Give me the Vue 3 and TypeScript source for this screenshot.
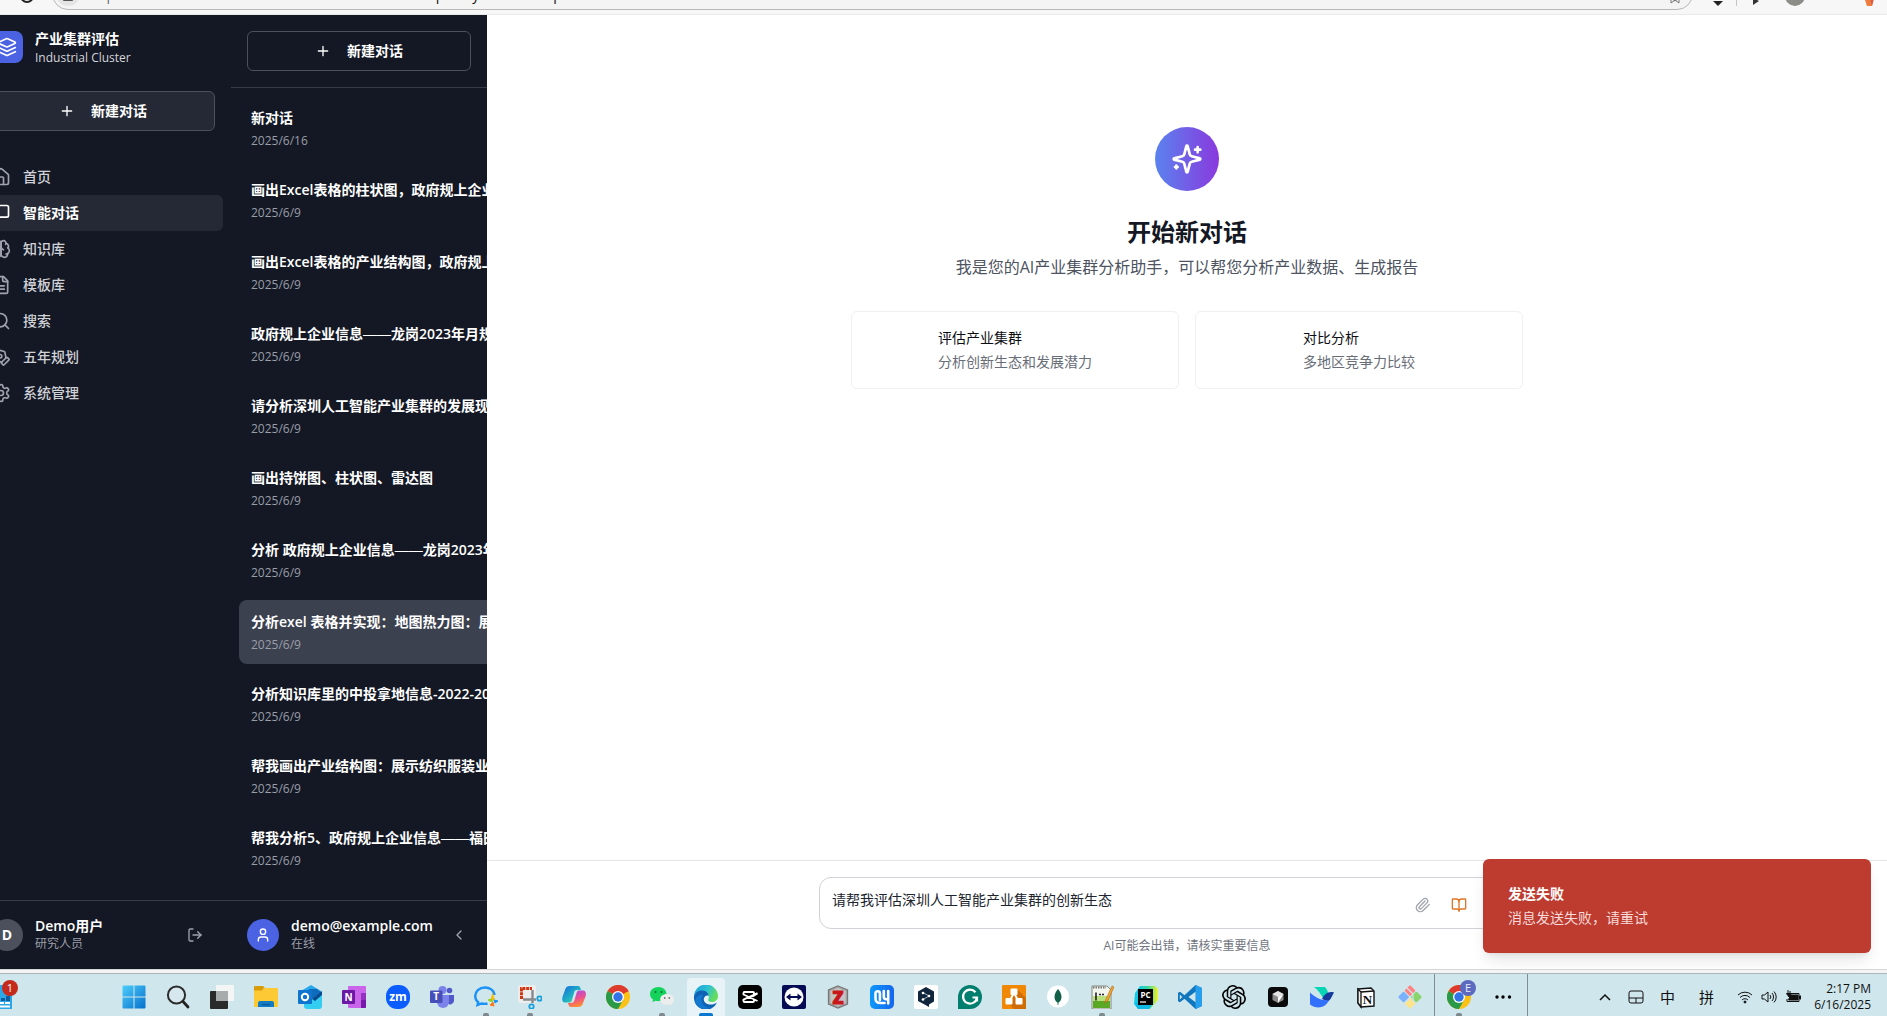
<script setup lang="ts">
import { ref } from 'vue'

interface NavItem { label: string; icon: string; active?: boolean }
interface Conversation { title: string; date: string; active?: boolean }
interface TaskItem { name: string; art: string; state?: 'running' | 'wide' | 'active' }

const draft = ref('请帮我评估深圳人工智能产业集群的创新生态')

const nav: NavItem[] = [
  { label: '首页', icon: '<path d="M15 21v-8a1 1 0 0 0-1-1h-4a1 1 0 0 0-1 1v8"/><path d="M3 10a2 2 0 0 1 .709-1.528l7-5.999a2 2 0 0 1 2.582 0l7 5.999A2 2 0 0 1 21 10v9a2 2 0 0 1-2 2H5a2 2 0 0 1-2-2z"/>' },
  { label: '智能对话', active: true, icon: '<path d="M21 15a2 2 0 0 1-2 2H7l-4 4V5a2 2 0 0 1 2-2h14a2 2 0 0 1 2 2z"/>' },
  { label: '知识库', icon: '<path d="M12 5a3 3 0 1 0-5.997.125 4 4 0 0 0-2.526 5.77 4 4 0 0 0 .556 6.588A4 4 0 1 0 12 18Z"/><path d="M12 5a3 3 0 1 1 5.997.125 4 4 0 0 1 2.526 5.77 4 4 0 0 1-.556 6.588A4 4 0 1 1 12 18Z"/><path d="M15 13a4.5 4.5 0 0 1-3-4 4.5 4.5 0 0 1-3 4"/><path d="M17.599 6.5a3 3 0 0 0 .399-1.375"/><path d="M19.938 10.5a4 4 0 0 1 .585.396"/><path d="M19.967 17.484A4 4 0 0 1 18 18"/>' },
  { label: '模板库', icon: '<path d="M15 2H6a2 2 0 0 0-2 2v16a2 2 0 0 0 2 2h12a2 2 0 0 0 2-2V7Z"/><path d="M14 2v4a2 2 0 0 0 2 2h4"/><path d="M10 9H8"/><path d="M16 13H8"/><path d="M16 17H8"/>' },
  { label: '搜索', icon: '<circle cx="11" cy="11" r="8"/><path d="m21 21-4.3-4.3"/>' },
  { label: '五年规划', icon: '<path d="M15.707 21.293a1 1 0 0 1-1.414 0l-1.586-1.586a1 1 0 0 1 0-1.414l5.586-5.586a1 1 0 0 1 1.414 0l1.586 1.586a1 1 0 0 1 0 1.414z"/><path d="m18 13-1.375-6.874a1 1 0 0 0-.746-.776L3.235 2.028a1 1 0 0 0-1.207 1.207L5.35 15.879a1 1 0 0 0 .776.746L13 18"/><path d="m2.3 2.3 7.286 7.286"/><circle cx="11" cy="11" r="2"/>' },
  { label: '系统管理', icon: '<path d="M12.22 2h-.44a2 2 0 0 0-2 2v.18a2 2 0 0 1-1 1.73l-.43.25a2 2 0 0 1-2 0l-.15-.08a2 2 0 0 0-2.73.73l-.22.38a2 2 0 0 0 .73 2.73l.15.1a2 2 0 0 1 1 1.72v.51a2 2 0 0 1-1 1.74l-.15.09a2 2 0 0 0-.73 2.73l.22.38a2 2 0 0 0 2.73.73l.15-.08a2 2 0 0 1 2 0l.43.25a2 2 0 0 1 1 1.73V20a2 2 0 0 0 2 2h.44a2 2 0 0 0 2-2v-.18a2 2 0 0 1 1-1.73l.43-.25a2 2 0 0 1 2 0l.15.08a2 2 0 0 0 2.73-.73l.22-.39a2 2 0 0 0-.73-2.73l-.15-.08a2 2 0 0 1-1-1.74v-.5a2 2 0 0 1 1-1.74l.15-.09a2 2 0 0 0 .73-2.73l-.22-.38a2 2 0 0 0-2.73-.73l-.15.08a2 2 0 0 1-2 0l-.43-.25a2 2 0 0 1-1-1.73V4a2 2 0 0 0-2-2z"/><circle cx="12" cy="12" r="3"/>' },
]

const conversations: Conversation[] = [
  { title: '新对话', date: '2025/6/16' },
  { title: '画出Excel表格的柱状图，政府规上企业', date: '2025/6/9' },
  { title: '画出Excel表格的产业结构图，政府规上', date: '2025/6/9' },
  { title: '政府规上企业信息——龙岗2023年月规', date: '2025/6/9' },
  { title: '请分析深圳人工智能产业集群的发展现', date: '2025/6/9' },
  { title: '画出持饼图、柱状图、雷达图', date: '2025/6/9' },
  { title: '分析 政府规上企业信息——龙岗2023年', date: '2025/6/9' },
  { title: '分析exel 表格并实现：地图热力图：展', date: '2025/6/9', active: true },
  { title: '分析知识库里的中投拿地信息-2022-202', date: '2025/6/9' },
  { title: '帮我画出产业结构图：展示纺织服装业', date: '2025/6/9' },
  { title: '帮我分析5、政府规上企业信息——福田', date: '2025/6/9' },
]

// Dash pairs get a face with full-width dashes so that they join into one line.
const splitDashes = (title: string): string[] => title.split(/(——)/)

const suggestions = [
  { title: '评估产业集群', text: '分析创新生态和发展潜力' },
  { title: '对比分析', text: '多地区竞争力比较' },
]

const f = 'font-family="Open Sans, sans-serif" text-anchor="middle"'
const chrome = '<circle cx="12" cy="12" r="12" fill="#fbc116"/><path d="M12 12 1.6 6A12 12 0 0 1 22.4 6z" fill="#dd3b2e"/><path d="M12 12 1.6 6A12 12 0 0 0 12 24l5-9z" fill="#2a9a48"/><path d="M12 6.5h10.7A12 12 0 0 0 12 0z" fill="#dd3b2e"/><circle cx="12" cy="12" r="6" fill="#fff"/><circle cx="12" cy="12" r="4.7" fill="#3273e6"/>'

const tasks: TaskItem[] = [
  { name: 'Start', art: '<defs><linearGradient id="gw" x2="1" y2="1"><stop stop-color="#4ccdfb"/><stop offset="1" stop-color="#0670cc"/></linearGradient></defs><path fill="url(#gw)" d="M1.5.5h10v11H.5v-10a1 1 0 0 1 1-1zM12.500.5h10a1 1 0 0 1 1 1v10h-11zM.5 12.500h11v11h-10a1 1 0 0 1-1-1zM12.500 12.500h11v10a1 1 0 0 1-1 1h-10z"/>' },
  { name: 'Search', art: '<circle cx="10.500" cy="10" r="8.600" fill="#d6e8ee" stroke="#2c2c2c" stroke-width="2"/><path d="m17 16.500 5 5.500" stroke="#222" stroke-width="2.800" stroke-linecap="round"/>' },
  { name: 'Task view', art: '<rect x="0" y="6" width="18" height="18" rx="1" fill="#2a2a2a"/><rect x="6" y="0" width="18" height="16" rx="1" fill="#f4f5f5"/><path d="M6 6h12v10H6z" fill="#a8abac"/>' },
  { name: 'File Explorer', art: '<path d="M0 2a1 1 0 0 1 1-1h8l2 2h-1L8 6H0z" fill="#d99b08"/><path d="M0 5.500h8l2.500-2.500H23a1 1 0 0 1 1 1V22H0z" fill="#fdc934"/><path d="M4 22v-4a2 2 0 0 1 2-2h12a2 2 0 0 1 2 2v4z" fill="#117cc4"/><path d="M8 19h8v1.200H8z" fill="#0a5793"/>' },
  { name: 'Outlook', art: '<path d="M3 6 13 0l10 6v5H3z" fill="#28a8ea"/><path d="M11 4h8l5 4v8H11z" fill="#0f6cbd"/><path d="M6 12l8 2 10-7v14a3 3 0 0 1-3 3H9a3 3 0 0 1-3-3z" fill="#32cdf1"/><path d="m14 14 10-8v4l-7 6z" fill="#0a4a8c"/><rect y="5" width="14" height="14" rx="1" fill="#0d74cf"/><circle cx="7" cy="12" r="3.200" fill="none" stroke="#fff" stroke-width="2"/>' },
  { name: 'OneNote', art: `<rect x="6" y="1" width="18" height="22" rx="1" fill="#ca64ea"/><path d="M19 8h5v7h-5z" fill="#9332bf"/><path d="M19 15h5v7a1 1 0 0 1-1 1h-4z" fill="#7719aa"/><rect y="5" width="13" height="14" rx="1" fill="#6d17a5"/><text x="6.500" y="15.500" font-size="10" font-weight="700" fill="#fff" ${f}>N</text>` },
  { name: 'Zoom', art: `<rect width="24" height="24" rx="11" fill="#0b5cff"/><text x="12" y="16" font-size="12" font-weight="700" fill="#fff" ${f}>zm</text>` },
  { name: 'Teams', art: `<circle cx="12.500" cy="5" r="4" fill="#7b83eb"/><circle cx="19.500" cy="5.500" r="2.800" fill="#5059c9"/><path d="M16 10h8v6a4 4 0 0 1-7 2z" fill="#5059c9"/><path d="M7 10h12v7a6 6 0 0 1-12 0z" fill="#7b83eb"/><rect y="5.500" width="12.500" height="12.500" rx="1" fill="#464eb8"/><text x="6.200" y="15.200" font-size="10" font-weight="700" fill="#fff" ${f}>T</text>` },
  { name: 'WeCom', state: 'running', art: '<path d="M20.500 10C20 5 15.500 2.500 11 2.500 5 2.500 1.200 6.500 1.200 11c0 3 1.500 5 3 6.200L3.500 20l4-1.500c2 .5 4.500.5 6-.2" fill="none" stroke="#1b92f5" stroke-width="2.400"/><path d="m18.500 10 1.500 4-2.500 1z" fill="#fbbc05" stroke="#fbbc05" stroke-width="1.500"/><path d="m14 15 3.500-1 1 3z" fill="#8fce1b" stroke="#8fce1b"/><path d="m16 20 3-3 1 4z" fill="#ff7a1a" stroke="#ff7a1a"/><path d="m20 15 4 1-3 2z" fill="#1b92f5" stroke="#1b92f5"/>' },
  { name: 'Snipping Tool', state: 'wide', art: '<rect width="18" height="18" rx="2" fill="#ededed"/><path d="M3.500 14V3.500H14" fill="none" stroke="#d1350f" stroke-width="3" stroke-dasharray="3 .8"/><path d="M14.500 5v9.500H5M14.500 12.500V18M14.500 14.500H18" fill="none" stroke="#858b8e" stroke-width="2.400"/><circle cx="21.500" cy="13.500" r="2.200" fill="none" stroke="#16a0dc" stroke-width="1.800"/><circle cx="13.500" cy="21.500" r="2.200" fill="none" stroke="#16a0dc" stroke-width="1.800"/>' },
  { name: 'Copilot', art: '<defs><linearGradient id="gc1" y2="1"><stop stop-color="#1468e0"/><stop offset=".6" stop-color="#20b8c0"/><stop offset="1" stop-color="#e8d32c"/></linearGradient><linearGradient id="gc2" x2=".3" y2="1"><stop stop-color="#a04cf0"/><stop offset=".6" stop-color="#f0508c"/><stop offset="1" stop-color="#fc8a38"/></linearGradient></defs><path d="M8 1h8c2 0 2.500 2 3 4h-4c-2 0-2.500 1-3 3l-2 7c-.5 2-1.500 2.500-3 2.500H3C0 17.500 0 14 .5 12L3 5c.8-2.500 2-4 5-4z" fill="url(#gc1)"/><path d="M16 22H9c-2 0-2.500-2-3-4h3c2 0 3-1 3.500-3l2-7c.5-2 1.500-2.500 3-2.500H21c3 0 3.300 3.500 2.700 5.500L21 18c-.8 2.500-2 4-5 4z" fill="url(#gc2)"/>' },
  { name: 'Chrome', art: chrome },
  { name: 'WeChat', state: 'running', art: '<path d="M8.500 2C3.500 2 0 5 0 9c0 2.500 1.200 4.200 3 5.500L2.500 17l3-1.300c5 1.300 11-1 11-6.700 0-4-3.500-7-8-7z" fill="#14d25c"/><circle cx="5.500" cy="7" r="1" fill="#0a6a30"/><circle cx="11.500" cy="7" r="1" fill="#0a6a30"/><path d="M17 9c4 0 7 2.300 7 5.500 0 2-1 3.200-2.200 4.200l.4 2-2.500-1.200c-5 1.200-9.500-1.200-9.500-5C10.200 11.300 13 9 17 9z" fill="#eceded"/><circle cx="14.700" cy="13" r=".9" fill="#777"/><circle cx="19.300" cy="13" r=".9" fill="#777"/>' },
  { name: 'Edge', state: 'active', art: '<defs><linearGradient id="ge" x2="1" y2=".4"><stop stop-color="#1c9be0"/><stop offset=".6" stop-color="#2fc3cf"/><stop offset="1" stop-color="#64dd5c"/></linearGradient></defs><path d="M0 12A12 12 0 0 1 24 11c0 4-3 6-6.500 6-3 0-4-1.500-3-3 1-2 0-5-4-5C5 9 0 12 0 12z" fill="url(#ge)"/><path d="M0 12c1-5 5-7 9-6.500 3 .4 5.500 2.500 5.500 5-6-1-7 8 1 9 3 .3 5.500-.5 7.500-2A12 12 0 0 1 0 12z" fill="#0f62b4"/><path d="M8.500 11c-3 5 1 12 8 11.500C12 25 4 24 1.500 18 .5 13 4 9.500 9 9.500z" fill="#1379cf"/>' },
  { name: 'CapCut', art: '<rect width="24" height="24" rx="5" fill="#000"/><path d="M19.500 8.500 16 10.500V8a1 1 0 0 0-1-1H6.500a1 1 0 0 0-1 1v1.500l14 6.500M19.500 8l-14 6.700V16a1 1 0 0 0 1 1H15a1 1 0 0 0 1-1v-2" fill="none" stroke="#fff" stroke-width="1.900"/>' },
  { name: 'TeamViewer', art: '<rect width="24" height="24" rx="2" fill="#050a52"/><circle cx="12" cy="12" r="9.500" fill="#fff"/><path d="m4 12 4.500-3.500V11h7V8.500L20 12l-4.500 3.500V13h-7v2.500z" fill="#050a52"/>' },
  { name: 'Zotero', art: `<path d="M12 1 21.500 5v14L12 23 2.500 19V5z" fill="#a9a9a9" stroke="#777" stroke-width="1.300"/><path d="m12 3 7.500 3v12L12 21l-7.500-3V6z" fill="#c4c4c4"/><text x="12" y="18.500" font-size="18" font-weight="800" fill="#c8161a" stroke="#c8161a" stroke-width="1" ${f}>Z</text>` },
  { name: 'Mail', art: '<defs><linearGradient id="gm" x2="1"><stop stop-color="#0c98fb"/><stop offset="1" stop-color="#1566ef"/></linearGradient></defs><rect width="24" height="24" rx="5" fill="url(#gm)"/><path d="M5.500 13.500V8.500a2.200 2.200 0 0 1 4.400 0V15M5.500 13.500c0 3.200 2 4.500 5 4.500h4M13.800 6v5.500c0 1.800.8 2.800 2.400 2.800h2M18.200 6v12.500" fill="none" stroke="#fff" stroke-width="2.600" stroke-linecap="round"/>' },
  { name: 'DeepL', art: '<rect width="24" height="24" rx="2" fill="#fff"/><path d="M12 2 20 6.500v10L15 19.500V22l-4-2.200-7-3.800V6.500z" fill="#11263d"/><path d="m9 7.500 6 3.500-6 3.500" fill="none" stroke="#9db4c8" stroke-width="1"/><circle cx="9" cy="8" r="1.300" fill="#fff"/><circle cx="15" cy="11" r="1.300" fill="#fff"/><circle cx="9" cy="14.500" r="1.300" fill="#fff"/>' },
  { name: 'Grammarly', art: '<path d="M0 24V12A12 12 0 1 1 12 24z" fill="#027e6f"/><path d="M17.500 7.200A7 7 0 1 0 19 12.500h-4.500M19 12.500v4" fill="none" stroke="#fff" stroke-width="2.200"/>' },
  { name: 'draw.io', art: '<rect width="24" height="24" rx="1" fill="#f08705"/><path d="m15 4 9 9v11H12L5 17z" fill="#d06c04"/><path d="m12 8-5 9M12 8l5 9" stroke="#fff" stroke-width="2"/><rect x="8.500" y="3.500" width="7" height="6.500" rx="1" fill="#fff"/><rect x="3.500" y="13" width="7" height="6.500" rx="1" fill="#fff"/><rect x="13.500" y="13" width="7" height="6.500" rx="1" fill="#fff"/>' },
  { name: 'MongoDB', art: '<circle cx="12" cy="11.500" r="11" fill="#fff"/><path d="M12 4c2 2.500 3.500 4.500 3.500 8 0 3-1.500 4.500-3 5.500L12.300 20h-.6l-.2-2.500c-1.500-1-3-2.500-3-5.500 0-3.500 1.500-5.500 3.500-8z" fill="#116149"/>' },
  { name: 'Notepad++', state: 'running', art: '<path d="M2 1h15l4 4v19H2z" fill="#f2f5ee" stroke="#84877d" stroke-width="1"/><path d="M3 11h17v7H3z" fill="#b9e07c"/><path d="M3 16h17v7H3z" fill="#5aa823"/><path d="M3 2.500h13" stroke="#777" stroke-width="2" stroke-dasharray="1.500 1"/><path d="M6 7.500v8M9 9.500h2M12 9.500h2" stroke="#222" stroke-width="1.600"/><path d="m22 1-6 13-1.500 4 3.500-2.500L24 2z" fill="#f2a72a" stroke="#a75712" stroke-width=".5"/>' },
  { name: 'PyCharm', art: `<defs><linearGradient id="gp" x2="1" y2="0"><stop offset=".2" stop-color="#12c9e8"/><stop offset=".6" stop-color="#3fd896"/><stop offset="1" stop-color="#f2f02c"/></linearGradient></defs><path d="M6 1h15l3 3v11l-8 9H4l-4-5 1-11z" fill="url(#gp)"/><path d="m1 19 3-2 14 3-3 4H4z" fill="#0fb7e4"/><path d="M4 4h15v16H4z" fill="#000"/><text x="11.500" y="12.500" font-size="8" font-weight="700" fill="#fff" ${f}>PC</text><path d="M6 17h6" stroke="#fff" stroke-width="1.200"/>` },
  { name: 'VS Code', art: '<path d="M17.500 0 24 3v18l-6.500 3L6.500 13.800 2 17.200 0 16.300V7.700l2-.9 4.500 3.400z" fill="#1076bd"/><path d="M17.500 0 24 3v18l-6.500 3z" fill="#26a0ee"/><path d="M17.500 6.800v10.400L10.500 12zM1.800 9.500 4.300 12l-2.500 2.500z" fill="#cfe6ec"/>' },
  { name: 'ChatGPT', art: '<path d="M22.2819 9.8211a5.9847 5.9847 0 0 0-.5157-4.9108 6.0462 6.0462 0 0 0-6.5098-2.9A6.0651 6.0651 0 0 0 4.9807 4.1818a5.9847 5.9847 0 0 0-3.9977 2.9 6.0462 6.0462 0 0 0 .7427 7.0966 5.98 5.98 0 0 0 .511 4.9107 6.051 6.051 0 0 0 6.5146 2.9001A5.9847 5.9847 0 0 0 13.2599 24a6.0557 6.0557 0 0 0 5.7718-4.2058 5.9894 5.9894 0 0 0 3.9977-2.9001 6.0557 6.0557 0 0 0-.7475-7.0729zm-9.022 12.6081a4.4755 4.4755 0 0 1-2.8764-1.0408l.1419-.0804 4.7783-2.7582a.7948.7948 0 0 0 .3927-.6813v-6.7369l2.02 1.1686a.071.071 0 0 1 .038.052v5.5826a4.504 4.504 0 0 1-4.4945 4.4944zm-9.6607-4.1254a4.4708 4.4708 0 0 1-.5346-3.0137l.142.0852 4.783 2.7582a.7712.7712 0 0 0 .7806 0l5.8428-3.3685v2.3324a.0804.0804 0 0 1-.0332.0615L9.74 19.9502a4.4992 4.4992 0 0 1-6.1408-1.6464zM2.3408 7.8956a4.485 4.485 0 0 1 2.3655-1.9728V11.6a.7664.7664 0 0 0 .3879.6765l5.8144 3.3543-2.0201 1.1685a.0757.0757 0 0 1-.071 0l-4.8303-2.7865A4.504 4.504 0 0 1 2.3408 7.872zm16.5963 3.8558L13.1038 8.364 15.1192 7.2a.0757.0757 0 0 1 .071 0l4.8303 2.7913a4.4944 4.4944 0 0 1-.6765 8.1042v-5.6772a.79.79 0 0 0-.407-.667zm2.0107-3.0231l-.142-.0852-4.7735-2.7818a.7759.7759 0 0 0-.7854 0L9.409 9.2297V6.8974a.0662.0662 0 0 1 .0284-.0615l4.8303-2.7866a4.4992 4.4992 0 0 1 6.6802 4.66zM8.3065 12.863l-2.02-1.1638a.0804.0804 0 0 1-.038-.0567V6.0742a4.4992 4.4992 0 0 1 7.3757-3.4537l-.142.0805L8.704 5.459a.7948.7948 0 0 0-.3927.6813zm1.0976-2.3654l2.602-1.4998 2.6069 1.4998v2.9994l-2.5974 1.4997-2.6067-1.4997Z" fill="#000"/>' },
  { name: 'Cursor', art: '<rect x="2" y="2" width="20" height="20" rx="4" fill="#0a0a0a"/><path d="m12 6 5.500 3v6L12 18l-5.500-3V9z" fill="#8a8a8a"/><path d="m12 6 5.500 3L12 12 6.500 9z" fill="#e4e4e4"/><path d="M12 12v6l5.500-9z" fill="#fff"/>' },
  { name: 'Feishu', art: '<path d="M4 2h11c2 2 3 5 3.500 7L13 13C10.500 8.500 8 5 4 2z" fill="#06d6b4"/><path d="M12 14c2.500-5 6.500-8 12-6.500-2 3-3 7-6 9z" fill="#15399c"/><path d="M0 7.500C6 13 12 16 19 15c-4 9-13 9-19 4.500z" fill="#3370fc"/>' },
  { name: 'Notion', art: '<path d="m4 4 13-1 3 3v15L7 22l-3-4z" fill="#fff" stroke="#111" stroke-width="1.400"/><path d="m4 4 3 3v15l-3-4z" fill="#eee" stroke="#111" stroke-width="1.300"/><path d="m7 7 13-1" stroke="#111" stroke-width="1.400"/><text x="13.500" y="19" font-size="13" font-weight="700" fill="#111" font-family="Liberation Serif, serif" text-anchor="middle">N</text>' },
  { name: 'Git', art: '<g transform="rotate(45 12 12)"><rect x="3.500" y="3.500" width="8" height="8" rx="1" fill="#ff8181"/><rect x="12.500" y="3.500" width="8" height="8" rx="1" fill="#8bd36b"/><rect x="3.500" y="12.500" width="8" height="8" rx="1" fill="#7cb1fb"/><rect x="12.500" y="12.500" width="8" height="8" rx="1" fill="#fde38c"/></g><path d="m9 3 6 6v8M11 14l-3 3" fill="none" stroke="#cfe6ec" stroke-width="1.200"/>' },
]
</script>

<template>
  <div class="screen">
    <header class="toolbar">
      <svg class="reload" viewBox="0 0 16 16"><circle cx="8" cy="8" r="6" /></svg>
      <div class="address">
        <span class="site-badge"><i></i></span>
        <span class="url"><span class="scheme">https://</span><span class="host">p</span><span class="mid">y</span><span class="tail">p</span><span class="scheme slash">/</span><span class="scheme slash">/</span></span>
        <svg class="star" viewBox="0 0 16 16"><path d="M4 14V9l4 3 4-3v5l-4-3z" /></svg>
      </div>
      <div class="tools">
        <svg viewBox="0 0 16 16"><path d="M3 11h10l-5 5z" fill="#222" /></svg>
        <i class="tool-split"></i>
        <svg viewBox="0 0 16 16"><path d="m6 8 6 3-6 4z" fill="#333" /></svg>
        <i class="avatar-dot"></i>
        <svg class="spark" viewBox="0 0 16 16"><path d="M2 4h12l-3 12H6z" fill="#ee7d3b" /><path d="M8 4h6l-3 12z" fill="#d9584a" /></svg>
      </div>
    </header>

    <div class="app">
      <aside class="sidebar primary">
        <div class="brand">
          <span class="logo">
            <svg class="icon i20" viewBox="0 0 24 24"><path d="m12.83 2.18a2 2 0 0 0-1.66 0L2.6 6.080a1 1 0 0 0 0 1.830l8.580 3.910a2 2 0 0 0 1.660 0l8.580-3.900a1 1 0 0 0 0-1.830Z" /><path d="m22 17.650-9.170 4.160a2 2 0 0 1-1.660 0L2 17.650" /><path d="m22 12.650-9.170 4.160a2 2 0 0 1-1.660 0L2 12.650" /></svg>
          </span>
          <div class="brand-text">
            <div class="brand-name">产业集群评估</div>
            <div class="brand-sub">Industrial Cluster</div>
          </div>
        </div>
        <button class="new-chat filled" type="button">
          <svg class="icon i16" viewBox="0 0 24 24"><path d="M5 12h14M12 5v14" /></svg>新建对话
        </button>
        <nav class="nav">
          <a v-for="n in nav" :key="n.label" href="#" :class="['nav-item', { active: n.active }]">
            <svg class="icon i20" viewBox="0 0 24 24" v-html="n.icon"></svg>{{ n.label }}
          </a>
        </nav>
        <footer class="account">
          <span class="avatar gray">D</span>
          <div class="who">
            <div class="who-name">Demo用户</div>
            <div class="who-sub">研究人员</div>
          </div>
          <button class="icon-button wide" type="button" aria-label="退出">
            <svg class="icon i16" viewBox="0 0 24 24"><path d="m16 17 5-5-5-5" /><path d="M21 12H9" /><path d="M9 21H5a2 2 0 0 1-2-2V5a2 2 0 0 1 2-2h4" /></svg>
          </button>
        </footer>
      </aside>

      <aside class="sidebar history">
        <div class="history-top">
          <button class="new-chat" type="button">
            <svg class="icon i16" viewBox="0 0 24 24"><path d="M5 12h14M12 5v14" /></svg>新建对话
          </button>
        </div>
        <ul class="conversations">
          <li v-for="c in conversations" :key="c.title" :class="['conversation', { active: c.active }]">
            <div class="conv-title"><span v-for="(part, i) in splitDashes(c.title)" :key="i" :class="{ dash: part === '——' }">{{ part }}</span></div>
            <div class="conv-date">{{ c.date }}</div>
          </li>
        </ul>
        <footer class="account">
          <span class="avatar blue">
            <svg class="icon i16" viewBox="0 0 24 24"><path d="M19 21v-2a4 4 0 0 0-4-4H9a4 4 0 0 0-4 4v2" /><circle cx="12" cy="7" r="4" /></svg>
          </span>
          <div class="who">
            <div class="who-name">demo@example.com</div>
            <div class="who-sub">在线</div>
          </div>
          <button class="icon-button" type="button" aria-label="收起">
            <svg class="icon i16" viewBox="0 0 24 24"><path d="m15 18-6-6 6-6" /></svg>
          </button>
        </footer>
      </aside>

      <main class="main">
        <section class="welcome">
          <span class="orb">
            <svg class="icon i32" viewBox="0 0 24 24"><path d="M9.937 15.500A2 2 0 0 0 8.500 14.063l-6.135-1.582a.5.5 0 0 1 0-.962L8.500 9.936A2 2 0 0 0 9.937 8.500l1.582-6.135a.5.5 0 0 1 .963 0L14.063 8.500A2 2 0 0 0 15.500 9.937l6.135 1.581a.5.5 0 0 1 0 .964L15.500 14.063a2 2 0 0 0-1.437 1.437l-1.582 6.135a.5.5 0 0 1-.963 0z" /><path d="M20 3v4M22 5h-4M4 17v2M5 18H3" /></svg>
          </span>
          <h1>开始新对话</h1>
          <p>我是您的AI产业集群分析助手，可以帮您分析产业数据、生成报告</p>
          <div class="cards">
            <button v-for="s in suggestions" :key="s.title" class="card" type="button">
              <span class="card-body">
                <span class="card-title">{{ s.title }}</span>
                <span class="card-text">{{ s.text }}</span>
              </span>
            </button>
          </div>
        </section>

        <section class="composer">
          <div class="composer-box">
            <textarea v-model="draft" rows="1" aria-label="消息"></textarea>
            <button class="icon-button attach" type="button" aria-label="附件">
              <svg class="icon i16" viewBox="0 0 24 24"><path d="m21.440 11.050-9.190 9.190a6 6 0 0 1-8.490-8.490l8.570-8.570A4 4 0 1 1 18 8.840l-8.590 8.570a2 2 0 0 1-2.830-2.830l8.490-8.480" /></svg>
            </button>
            <button class="icon-button book" type="button" aria-label="知识库">
              <svg class="icon i16" viewBox="0 0 24 24"><path d="M12 7v14" /><path d="M3 18a1 1 0 0 1-1-1V4a1 1 0 0 1 1-1h5a4 4 0 0 1 4 4 4 4 0 0 1 4-4h5a1 1 0 0 1 1 1v13a1 1 0 0 1-1 1h-6a3 3 0 0 0-3 3 3 3 0 0 0-3-3z" /></svg>
            </button>
          </div>
          <div class="note">AI可能会出错，请核实重要信息</div>
        </section>

        <div class="toast" role="alert">
          <div class="toast-title">发送失败</div>
          <div class="toast-text">消息发送失败，请重试</div>
        </div>
      </main>
    </div>

    <div class="window-edge"></div>

    <footer class="taskbar">
      <div class="widgets">
        <svg viewBox="0 0 24 24"><path d="M0 0h24v24H0z" fill="#2ba6e6" /><path d="M13 13h4v3h-4zM18 11h4v5h-4z" fill="#0f5fa0" /><path d="M10 18h6M17 18h5M10 21.500h12" stroke="#fff" stroke-width="2" /></svg>
        <span class="badge">1</span>
      </div>
      <div class="tasks">
        <button v-for="t in tasks" :key="t.name" :class="['task', t.state]" type="button" :aria-label="t.name">
          <svg viewBox="0 0 24 24" v-html="t.art"></svg>
        </button>
      </div>
      <div class="pinned">
        <button class="task running" type="button" aria-label="Chrome E">
          <svg viewBox="0 0 24 24" v-html="chrome"></svg><span class="profile">E</span>
        </button>
        <button class="task" type="button" aria-label="More">
          <svg viewBox="0 0 24 24"><circle cx="6" cy="12" r="1.700" /><circle cx="12" cy="12" r="1.700" /><circle cx="18.500" cy="12" r="1.700" /></svg>
        </button>
      </div>
      <div class="tray">
        <svg class="t16 chev" viewBox="0 0 16 16"><path d="m3 11 5-5 5 5" stroke-width="1.500" /></svg>
        <svg class="t16 pad" viewBox="0 0 16 16"><rect x="1" y="2" width="14" height="12" rx="2" /><path d="M1 9h14M8 9v5" /></svg>
        <span class="ime first">中</span>
        <span class="ime">拼</span>
        <div class="status">
          <svg class="t16" viewBox="0 0 16 16"><path d="M1 6a10 10 0 0 1 14 0M3 8.500a7 7 0 0 1 10 0M5 11a4.200 4.200 0 0 1 6 0" /><circle cx="8" cy="13" r="1" fill="#111" /></svg>
          <svg class="t16" viewBox="0 0 16 16"><path d="M1 6v4h2.500L7 13V3L3.500 6zM9 6a3 3 0 0 1 0 4M11 4a6 6 0 0 1 0 8M13 2.500a8 8 0 0 1 0 11" /></svg>
          <svg class="t16" viewBox="0 0 16 16"><path d="M5 4.500h9v8H2V10" /><path d="M5.500 6H13v5H3.500zM14.500 7h1.500v3h-1.500z" fill="#111" /><path d="M3 1v3M5 2v2M1.500 4.500h5L4 8z" fill="#111" /></svg>
        </div>
        <div class="clock"><span>2:17 PM</span><span>6/16/2025</span></div>
      </div>
    </footer>
  </div>
</template>

<style>
html, body { margin: 0; background: #f3f3f3; }
</style>

<style scoped>
.screen, .screen * { box-sizing: border-box; }
.screen {
  display: flex;
  flex-direction: column;
  height: 100vh;
  overflow: hidden;
  font-family: "Open Sans", "Noto Sans CJK SC", sans-serif;
  font-size: 14px;
  line-height: 20px;
}
button { font: inherit; border: 0; background: none; padding: 0; cursor: pointer; }

/* browser toolbar */
.toolbar {
  display: flex;
  align-items: flex-end;
  flex: none;
  height: 15px;
  padding: 0 10px 4px 19px;
  overflow: hidden;
  background: #f7f7f7;
  border-bottom: 1px solid #e9e9e9;
}
.reload { width: 16px; height: 16px; margin: 0 17px 6px 0; fill: none; stroke: #222; stroke-width: 2; }
.address {
  display: flex;
  flex: 1;
  align-items: center;
  height: 32px;
  border: 1px solid #b8b8b8;
  border-radius: 16px;
  background: #f4f4f4;
  flex-shrink: 0;
}
.site-badge { display: flex; align-items: center; justify-content: center; width: 24px; height: 24px; margin-left: 3px; border-radius: 12px; background: #e4e4e4; }
.site-badge i { width: 10px; height: 14px; border-radius: 1px; background: #555; }
.url { flex: 1; margin: 2px 0 0 8px; color: #111; }
.scheme { color: #6c6c6c; }
.host { margin-left: 300px; }
.mid { margin-left: 28px; }
.tail { margin-left: 74px; }
.slash { margin-left: 32px; }
.star { width: 16px; height: 16px; margin: 6px 9px 0 0; fill: none; stroke: #777; }
.tools { display: flex; align-items: flex-end; height: 16px; margin: 0 0 4px 17px; gap: 10px; }
.tools svg { width: 16px; height: 16px; flex: none; }
.tool-split { width: 1px; height: 16px; background: #c4c4c4; }
.avatar-dot { width: 20px; height: 20px; margin-left: 12px; border-radius: 10px; background: #8d8d88; }
.tools .spark { margin-left: 46px; }

/* page shell */
.app { display: flex; flex: 1; min-height: 0; overflow: hidden; background: #fff; }
.icon { flex: none; fill: none; stroke: currentColor; stroke-width: 2; stroke-linecap: round; stroke-linejoin: round; }
.i16 { width: 16px; height: 16px; }
.i20 { width: 20px; height: 20px; }
.i32 { width: 32px; height: 32px; }

.sidebar { display: flex; flex-direction: column; flex: none; width: 256px; overflow: hidden; background: #141824; color: #fff; }
.primary { margin-left: -25px; }
.brand { display: flex; align-items: center; gap: 12px; height: 64px; padding: 0 16px; }
.logo { display: flex; align-items: center; justify-content: center; width: 32px; height: 32px; border-radius: 8px; background: #4b63e2; }
.brand-text { padding-top: 2px; }
.brand-name { font-weight: 700; line-height: 20px; }
.brand-sub { font-size: 12px; line-height: 18px; color: #d4d6da; }
.new-chat {
  display: flex;
  align-items: center;
  justify-content: center;
  gap: 16px;
  height: 40px;
  border: 1px solid #4b505c;
  border-radius: 6px;
  color: #fff;
  font-weight: 700;
}
.filled { margin: 12px 16px 0; background: #242935; }
.nav { display: flex; flex-direction: column; flex: 1; padding: 28px 8px 0; }
.nav-item { display: flex; align-items: center; gap: 12px; height: 36px; padding: 0 8px; border-radius: 6px; color: #d0d2d8; font-weight: 500; text-decoration: none; }
.nav-item .icon { color: #a0a3ad; }
.nav-item.active { background: #242935; color: #fff; font-weight: 700; }
.nav-item.active .icon { color: #fff; }

.account { display: flex; align-items: center; flex: none; height: 69px; padding: 0 16px; border-top: 1px solid #383c48; }
.avatar { display: flex; align-items: center; justify-content: center; flex: none; width: 32px; height: 32px; border-radius: 16px; font-weight: 700; }
.gray { background: #4b505c; }
.blue { background: #4b63e2; }
.who { flex: 1; margin-left: 12px; }
.who-name { font-weight: 600; line-height: 18px; }
.who-sub { font-size: 12px; line-height: 18px; color: #9a9ea8; }
.icon-button { display: flex; align-items: center; justify-content: center; width: 24px; height: 32px; color: #a0a3ad; }
.wide { width: 40px; }

.history-top { display: flex; flex-direction: column; flex: none; padding: 16px; border-bottom: 1px solid #383c48; }
.conversations { display: flex; flex-direction: column; flex: 1; gap: 8px; min-height: 0; margin: 0; padding: 8px 0 8px 8px; overflow: hidden; list-style: none; }
.conversation { flex: none; height: 64px; padding: 12px; border-radius: 8px 0 0 8px; white-space: nowrap; }
.conversation.active { background: #3c414f; }
.conv-title { height: 20px; font-weight: 600; white-space: pre; }
.dash { font-family: "Liberation Sans", sans-serif; font-weight: 400; line-height: 14px; }
.conv-date { margin-top: 4px; font-size: 12px; line-height: 18px; color: #9a9ea8; }

/* main column */
.main { position: relative; display: flex; flex-direction: column; flex: 1; min-width: 0; border-radius: 0 0 8px 0; }
.welcome { display: flex; flex-direction: column; align-items: center; flex: 1; padding-top: 112px; }
.orb { display: flex; align-items: center; justify-content: center; width: 64px; height: 64px; border-radius: 32px; color: #fff; background: linear-gradient(to right, #5a83ee, #8a39de); }
h1 { margin: 24px 0 0; font-size: 24px; line-height: 34px; font-weight: 700; color: #141824; }
p { margin: 6px 0 0; font-size: 16px; line-height: 24px; color: #4d535f; }
.cards { display: grid; grid-template-columns: 1fr 1fr; gap: 16px; width: 672px; max-width: 100%; margin-top: 32px; }
.card { display: flex; justify-content: center; padding: 16px; border: 1px solid #f0f0f2; border-radius: 6px; }
.card-body { display: flex; flex-direction: column; gap: 4px; text-align: left; }
.card-title { color: #0c0e14; }
.card-text { color: #686d78; }

.composer { display: flex; flex-direction: column; align-items: center; flex: none; height: 109px; padding-top: 16px; border-top: 1px solid #e5e6e9; }
.composer-box { display: flex; align-items: center; width: 736px; max-width: 100%; height: 52px; padding: 0 83px 0 12px; border: 1px solid #d0d2d8; border-radius: 12px; }
textarea { flex: 1; height: 26px; padding: 0; border: 0; outline: 0; resize: none; overflow: hidden; background: none; color: #20242e; font: inherit; }
.composer .icon-button { margin: 4px 0 0; }
.composer .book { margin-left: 12px; color: #dd7627; }
.note { margin-top: 8px; font-size: 12px; line-height: 18px; color: #6f747e; }

.toast {
  position: absolute;
  right: 16px;
  bottom: 16px;
  width: 388px;
  padding: 25px;
  border-radius: 6px;
  background: #be3b30;
  color: #fff;
  box-shadow: 0 10px 15px -3px rgba(0, 0, 0, 0.1), 0 4px 6px -4px rgba(0, 0, 0, 0.1);
}
.toast-title { font-weight: 700; }
.toast-text { margin-top: 4px; color: #f5dcda; }

/* desktop taskbar */
.window-edge { flex: none; height: 5px; background: #f4f4f4; border-top: 1px solid #d6d6d6; border-bottom: 1px solid #a9b5b8; }
.taskbar { display: flex; flex: none; height: 42px; background: #cfe6ec; }
.widgets { position: relative; width: 112px; }
.widgets svg { display: block; width: 24px; height: 24px; margin: 11px 0 0 -12px; }
.badge { position: absolute; left: 2px; top: 6px; width: 16px; height: 16px; border-radius: 8px; background: #c42b1c; color: #fff; font-size: 11px; line-height: 16px; text-align: center; }
.tasks { display: flex; padding-right: 2px; }
.task { position: relative; display: flex; justify-content: center; width: 44px; padding-top: 11px; }
.task svg { width: 24px; height: 24px; }
.task.active { width: 38px; margin: 4px 3px 0; padding-top: 7px; border-radius: 4px 4px 0 0; background: #e8f3f7; }
.task.running::after, .task.wide::after, .task.active::after { content: ""; position: absolute; bottom: 0; width: 6px; height: 3px; border-radius: 2px 2px 0 0; background: #7d898d; }
.task.active::after { width: 14px; background: #0a78d0; }
.pinned { display: flex; padding: 0 2px 0 2px; border-left: 1px solid #7f8d91; border-right: 1px solid #7f8d91; }
.profile { position: absolute; right: 5px; top: 6px; width: 16px; height: 16px; border-radius: 8px; background: #5c6bc0; color: #e8eaf6; font-size: 11px; line-height: 16px; }
.tray { display: flex; flex: 1; align-items: center; justify-content: flex-end; padding: 4px 16px 0 0; color: #111; }
.t16 { width: 16px; height: 16px; fill: none; stroke: #111; stroke-width: 1; }
.chev { margin-right: 15px; }
.pad { margin-right: 16px; }
.ime { font-size: 15px; width: 15px; }
.first { margin-right: 24px; }
.status { display: flex; gap: 8px; margin-left: 23px; }
.clock { display: flex; flex-direction: column; align-items: flex-end; width: 70px; font-size: 12px; line-height: 16px; }
</style>
